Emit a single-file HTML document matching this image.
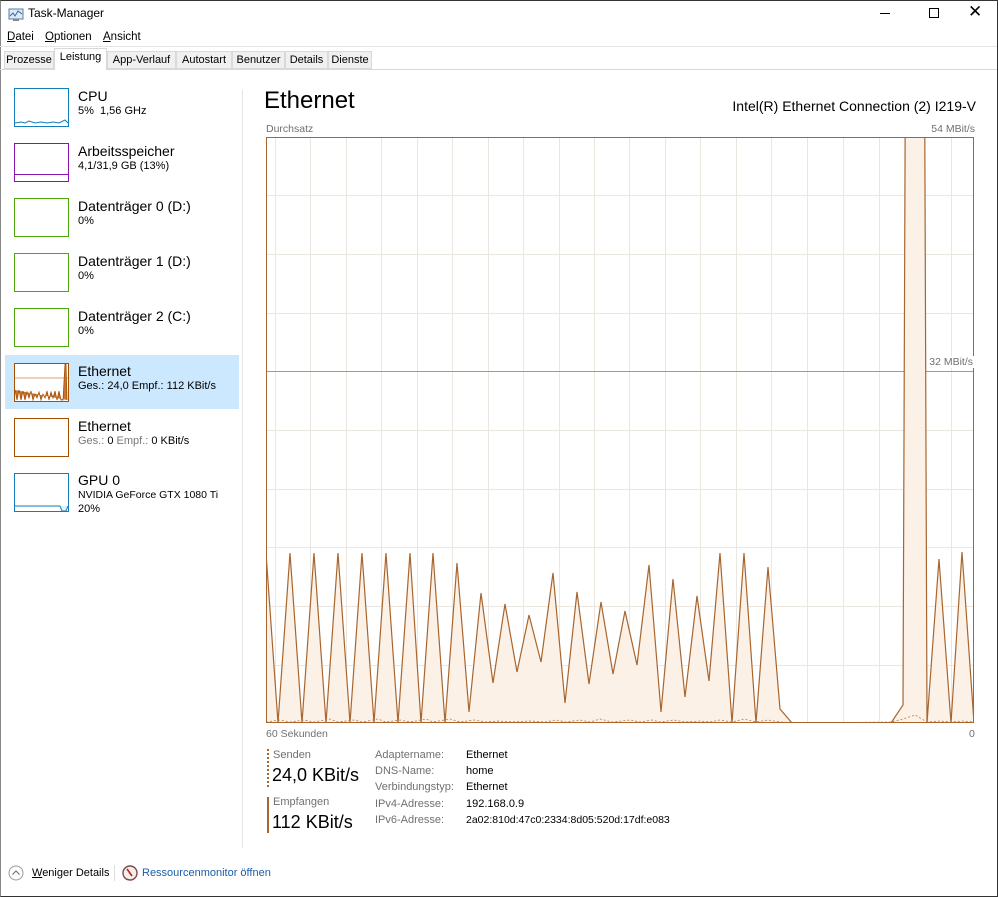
<!DOCTYPE html>
<html><head><meta charset="utf-8"><style>
*{margin:0;padding:0;box-sizing:border-box}
body{width:998px;height:897px;background:#fff;font-family:"Liberation Sans",sans-serif;color:#000;position:relative;overflow:hidden;font-size:11.5px}
.a{position:absolute;white-space:nowrap}
.tab{position:absolute;top:51px;height:18px;font-size:11px;padding:2px 0 0;text-align:center;border:1px solid #d9d9d9;background:#f0f0f0;white-space:nowrap;overflow:hidden}
.th{position:absolute;left:14px;width:55px;height:39px;background:#fff}
.t1{position:absolute;left:78px;font-size:14px;white-space:nowrap}
.t2{position:absolute;left:78px;font-size:11px;white-space:nowrap}
.lb{position:absolute;left:375px;font-size:11px;color:#707070;white-space:nowrap}
.vl{position:absolute;left:466px;font-size:11px;white-space:nowrap}
</style></head><body>
<div style="position:absolute;left:0;top:0;width:998px;height:897px;border:1px solid #333;border-left-color:#888"></div>
<svg class="a" style="left:8px;top:8px" width="16" height="14"><rect x="1" y="1" width="14" height="10" fill="#dfe9f4" stroke="#5a7ca6"/><polyline points="2,8 5,5 7,8 10,3 14,6" fill="none" stroke="#2a6bb0"/><rect x="5" y="11" width="6" height="2" fill="#888"/></svg>
<div class="a" style="left:28px;top:6px;font-size:12px">Task-Manager</div>
<div class="a" style="left:880px;top:13px;width:10px;height:1px;background:#000"></div>
<div class="a" style="left:929px;top:8px;width:10px;height:10px;border:1px solid #000"></div>
<div class="a" style="left:968px;top:2px;font-size:17px;font-weight:300">✕</div>
<div class="a" style="left:7px;top:31px;font-size:11.5px"><u>D</u>atei</div>
<div class="a" style="left:45px;top:31px;font-size:11.5px"><u>O</u>ptionen</div>
<div class="a" style="left:103px;top:31px;font-size:11.5px"><u>A</u>nsicht</div>
<div class="a" style="left:0;top:46px;width:997px;height:1px;background:#e4e4e4"></div>
<div class="a" style="left:0;top:69px;width:997px;height:1px;background:#d9d9d9"></div>
<div class="tab" style="left:4px;width:50px">Prozesse</div>
<div class="tab" style="left:54px;top:48px;height:22px;width:53px;background:#fff;border-bottom:none">Leistung</div>
<div class="tab" style="left:107px;width:69px">App-Verlauf</div>
<div class="tab" style="left:176px;width:56px">Autostart</div>
<div class="tab" style="left:232px;width:53px">Benutzer</div>
<div class="tab" style="left:285px;width:43px">Details</div>
<div class="tab" style="left:328px;width:44px">Dienste</div>

<div class="a" style="left:242px;top:90px;width:1px;height:758px;background:#e4e4e4"></div>
<div class="a" style="left:5px;top:355px;width:234px;height:54px;background:#cce8ff"></div>

<div class="th" style="top:88px;border:1px solid #117dbb"><svg width="53" height="37"><polyline points="0,34 6,33 10,34 14,32 20,34 26,33 32,34 38,33 44,34 50,31 53,34" fill="none" stroke="#117dbb"/></svg></div>
<div class="t1" style="top:88px">CPU</div><div class="t2" style="top:105px">5%&nbsp; 1,56 GHz</div>
<div class="th" style="top:143px;border:1px solid #8b12ae"><div style="position:absolute;left:0;right:0;top:30px;height:1px;background:#8b12ae"></div></div>
<div class="t1" style="top:143px">Arbeitsspeicher</div><div class="t2" style="top:160px">4,1/31,9 GB (13%)</div>
<div class="th" style="top:198px;border:1px solid #4da60c"></div>
<div class="t1" style="top:198px">Datenträger 0 (D:)</div><div class="t2" style="top:215px">0%</div>
<div class="th" style="top:253px;border:1px solid #4da60c"></div>
<div class="t1" style="top:253px">Datenträger 1 (D:)</div><div class="t2" style="top:270px">0%</div>
<div class="th" style="top:308px;border:1px solid #4da60c"></div>
<div class="t1" style="top:308px">Datenträger 2 (C:)</div><div class="t2" style="top:325px">0%</div>
<div class="th" style="top:363px;border:1px solid #a74f01"><svg width="53" height="37"><line x1="0" y1="14" x2="53" y2="14" stroke="#a74f01" stroke-width=".6"/><polyline points="0,26 2,36 4,26 6,36 8,27 10,36 12,28 14,34 16,27 18,36 20,30 22,34 24,28 26,36 28,30 30,34 32,27 34,36 36,28 38,34 40,27 42,36 44,27 46,36 48,36 50,0 51,0 52,36" fill="#c87533" stroke="#a74f01" stroke-width=".8"/></svg></div>
<div class="t1" style="top:363px">Ethernet</div><div class="t2" style="top:380px">Ges.: 24,0 Empf.: 112 KBit/s</div>
<div class="th" style="top:418px;border:1px solid #a74f01"></div>
<div class="t1" style="top:418px">Ethernet</div><div class="t2" style="top:435px"><span style="color:#777">Ges.:</span> 0 <span style="color:#777">Empf.:</span> 0 KBit/s</div>
<div class="th" style="top:473px;border:1px solid #117dbb"><svg width="53" height="37"><polyline points="0,32 45,32 47,37 51,37 53,32" fill="#e6f1f9" stroke="#117dbb"/></svg></div>
<div class="t1" style="top:472px">GPU 0</div><div class="t2" style="top:489px;font-size:10.5px">NVIDIA GeForce GTX 1080 Ti</div><div class="t2" style="top:503px">20%</div>

<div class="a" style="left:264px;top:87px;font-size:24px">Ethernet</div>
<div class="a" style="right:22px;top:98px;font-size:14px">Intel(R) Ethernet Connection (2) I219-V</div>
<div class="a" style="left:266px;top:123px;font-size:10.5px;color:#707070">Durchsatz</div>
<div class="a" style="right:23px;top:123px;font-size:10.5px;color:#707070">54 MBit/s</div>
<svg class="a" style="left:265px;top:136px" width="711" height="589" viewBox="265 136 711 589">
<defs><clipPath id="c"><rect x="266" y="137" width="708" height="586"/></clipPath></defs>
<g stroke="#ece6e0" stroke-width="1">
<line x1="266" y1="195.5" x2="974" y2="195.5"/><line x1="266" y1="254.5" x2="974" y2="254.5"/><line x1="266" y1="313.5" x2="974" y2="313.5"/><line x1="266" y1="430.5" x2="974" y2="430.5"/><line x1="266" y1="489.5" x2="974" y2="489.5"/><line x1="266" y1="547.5" x2="974" y2="547.5"/><line x1="266" y1="606.5" x2="974" y2="606.5"/><line x1="266" y1="665.5" x2="974" y2="665.5"/>
<line x1="275.5" y1="137" x2="275.5" y2="723"/><line x1="310.5" y1="137" x2="310.5" y2="723"/><line x1="346.5" y1="137" x2="346.5" y2="723"/><line x1="381.5" y1="137" x2="381.5" y2="723"/><line x1="417.5" y1="137" x2="417.5" y2="723"/><line x1="452.5" y1="137" x2="452.5" y2="723"/><line x1="488.5" y1="137" x2="488.5" y2="723"/><line x1="523.5" y1="137" x2="523.5" y2="723"/><line x1="559.5" y1="137" x2="559.5" y2="723"/><line x1="594.5" y1="137" x2="594.5" y2="723"/><line x1="629.5" y1="137" x2="629.5" y2="723"/><line x1="665.5" y1="137" x2="665.5" y2="723"/><line x1="700.5" y1="137" x2="700.5" y2="723"/><line x1="736.5" y1="137" x2="736.5" y2="723"/><line x1="771.5" y1="137" x2="771.5" y2="723"/><line x1="807.5" y1="137" x2="807.5" y2="723"/><line x1="843.5" y1="137" x2="843.5" y2="723"/><line x1="879.5" y1="137" x2="879.5" y2="723"/><line x1="914.5" y1="137" x2="914.5" y2="723"/><line x1="951.5" y1="137" x2="951.5" y2="723"/>
</g>
<line x1="266" y1="371.5" x2="974" y2="371.5" stroke="#c09070" stroke-width="1"/>
<g clip-path="url(#c)">
<polygon points="266,723 266,553 278,723 290,553 302,723 314,553 326,723 338,553 350,723 362,553 374,723 386,553 398,723 410,553 421,723 433,553 445,723 457,563 469,712 481,593 493,683 505,604 517,672 529,615 541,662 553,573 565,703 577,592 589,684 601,602 613,674 625,611 637,665 649,565 661,712 673,579 685,697 697,596 709,681 720,553 732,723 744,553 756,723 768,567 780,709 792,723 891,723 903,705 915,-2500 927,723 939,559 951,723 962,552 974,723" fill="#fcf1e7" stroke="#a8652e" stroke-width="1.2" stroke-linejoin="miter"/>
<polyline points="266,722 280,720 290,722 304,720 314,722 330,719 338,722 354,720 362,722 378,719 386,722 400,720 410,722 426,719 433,722 450,719 460,722 474,720 486,722 498,721 512,722 530,721 545,722 556,720 566,722 580,720 590,722 600,719 612,722 630,720 640,722 652,720 660,722 674,720 685,722 700,721 710,722 720,720 732,722 744,719 756,722 768,720 780,722 795,723 891,722 903,719 915,715 927,722 940,721 951,722 962,721 974,722" fill="none" stroke="#b87a45" stroke-width=".8" stroke-dasharray="2,2"/>
</g>
<rect x="266.5" y="137.5" width="707" height="585" fill="none" stroke="#a8652e" stroke-width="1"/>
</svg>
<div class="a" style="right:24px;top:356px;font-size:10.5px;color:#707070;background:#fff;padding:0 1px">32 MBit/s</div>
<div class="a" style="left:266px;top:728px;font-size:10.5px;color:#707070">60 Sekunden</div>
<div class="a" style="left:969px;top:728px;font-size:10.5px;color:#707070">0</div>

<div class="a" style="left:267px;top:749px;width:0;height:38px;border-left:2px dotted #a8652e"></div>
<div class="a" style="left:267px;top:797px;width:2px;height:36px;background:#a8652e"></div>
<div class="a" style="left:273px;top:749px;font-size:11px;color:#707070">Senden</div>
<div class="a" style="left:272px;top:765px;font-size:18px">24,0 KBit/s</div>
<div class="a" style="left:273px;top:796px;font-size:11px;color:#707070">Empfangen</div>
<div class="a" style="left:272px;top:812px;font-size:18px">112 KBit/s</div>
<div class="lb" style="top:749px">Adaptername:</div><div class="vl" style="top:749px">Ethernet</div>
<div class="lb" style="top:765px">DNS-Name:</div><div class="vl" style="top:765px">home</div>
<div class="lb" style="top:781px">Verbindungstyp:</div><div class="vl" style="top:781px">Ethernet</div>
<div class="lb" style="top:798px">IPv4-Adresse:</div><div class="vl" style="top:798px">192.168.0.9</div>
<div class="lb" style="top:814px">IPv6-Adresse:</div><div class="vl" style="top:814px;font-size:10.5px">2a02:810d:47c0:2334:8d05:520d:17df:e083</div>

<svg class="a" style="left:8px;top:865px" width="16" height="16"><circle cx="8" cy="8" r="7" fill="none" stroke="#999"/><polyline points="4.5,9.5 8,6 11.5,9.5" fill="none" stroke="#777" stroke-width="1.2"/></svg>
<div class="a" style="left:32px;top:867px;font-size:11px"><u>W</u>eniger Details</div>
<div class="a" style="left:114px;top:865px;width:1px;height:16px;background:#ddd"></div>
<svg class="a" style="left:122px;top:865px" width="16" height="16"><circle cx="8" cy="8" r="7" fill="#f4efe8" stroke="#7a4a4a" stroke-width="1.4"/><line x1="5" y1="4" x2="10" y2="11" stroke="#c42020" stroke-width="1.6"/></svg>
<div class="a" style="left:142px;top:867px;font-size:11px;color:#1a5ea8">Ressourcenmonitor öffnen</div>
</body></html>
